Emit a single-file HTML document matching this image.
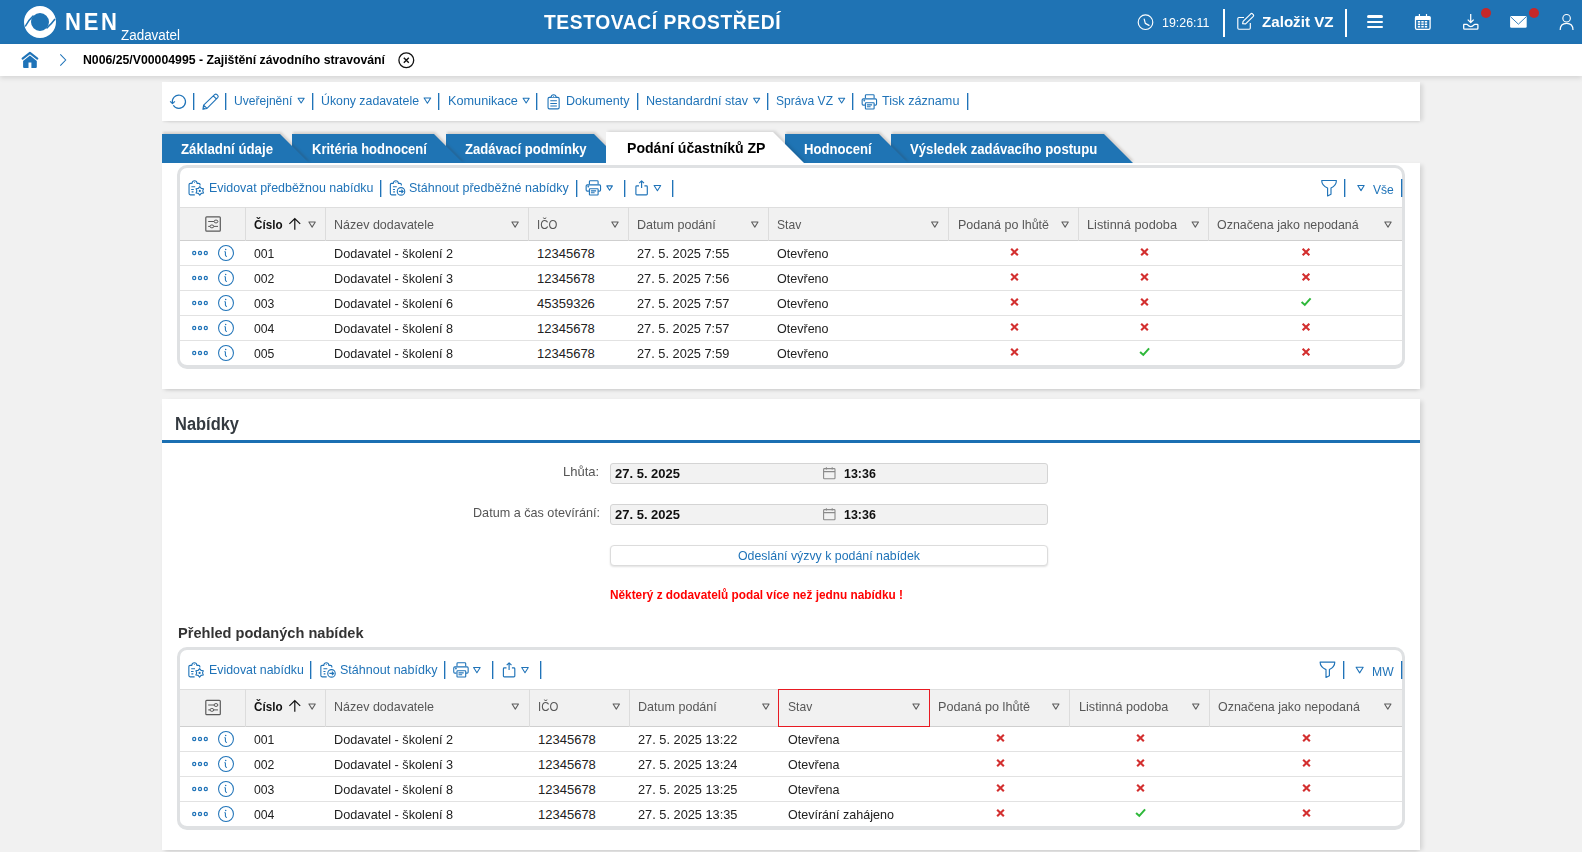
<!DOCTYPE html>
<html><head><meta charset="utf-8"><title>NEN</title>
<style>
html,body{margin:0;padding:0;width:1582px;height:852px;overflow:hidden;background:#f1f1f1;font-family:"Liberation Sans",sans-serif}
.t{position:absolute;white-space:nowrap;line-height:1;transform-origin:0 0}
svg{display:block}
</style></head><body>
<div style="position:relative;width:1582px;height:852px;overflow:hidden">
<div style="position:absolute;left:0;top:0;width:1582px;height:852px;background:#f1f1f1"></div>
<div style="position:absolute;left:0px;top:0px;width:1582px;height:44px;background:#1f73b4"></div>
<div style="position:absolute;left:0px;top:44px;width:1582px;height:32px;background:#fff;box-shadow:0 2px 5px rgba(0,0,0,0.12)"></div>
<div style="position:absolute;left:162px;top:82px;width:1258px;height:39px;background:#fff;box-shadow:4px 1px 4px -1px rgba(0,0,0,0.10), 0 2px 2px -1px rgba(0,0,0,0.08)"></div>
<div style="position:absolute;left:162px;top:163px;width:1258px;height:226px;background:#fff;box-shadow:4px 1px 4px -1px rgba(0,0,0,0.10), 0 3px 4px -2px rgba(0,0,0,0.13)"></div>
<div style="position:absolute;left:162px;top:399px;width:1258px;height:451px;background:#fff;box-shadow:4px 1px 4px -1px rgba(0,0,0,0.10), 0 3px 4px -2px rgba(0,0,0,0.13)"></div>
<svg style="position:absolute;left:24px;top:6px;overflow:visible" width="32" height="32" viewBox="0 0 32 32" >
<circle cx="16" cy="16" r="12.5" fill="none" stroke="#fff" stroke-width="7"/>
<path d="M9.5 9.6 Q4.5 14 1.2 20.5" fill="none" stroke="#1f73b4" stroke-width="1.5"/>
<path d="M22.5 22.4 Q27.5 18 31 13" fill="none" stroke="#1f73b4" stroke-width="1.5"/>
</svg>
<div style="position:absolute;left:1222.9px;top:8.5px;width:2.2px;height:28.1px;background:#fff"></div>
<div style="position:absolute;left:1344.9px;top:8.5px;width:2.2px;height:28.1px;background:#fff"></div>
<div style="position:absolute;left:1367px;top:15.25px;width:16px;height:2.5px;background:#fff;border-radius:1.5px"></div>
<div style="position:absolute;left:1367px;top:20.65px;width:16px;height:2.5px;background:#fff;border-radius:1.5px"></div>
<div style="position:absolute;left:1367px;top:25.95px;width:16px;height:2.5px;background:#fff;border-radius:1.5px"></div>
<div style="position:absolute;left:1481px;top:8px;width:10px;height:10px;border-radius:50%;background:#c62828"></div>
<div style="position:absolute;left:1529px;top:8px;width:10px;height:10px;border-radius:50%;background:#c62828"></div>
<svg style="position:absolute;left:398px;top:51.5px;overflow:visible" width="17" height="17" viewBox="0 0 17 17" ><circle cx="8.3" cy="8.3" r="7.4" fill="none" stroke="#111" stroke-width="1.3"/><path d="M5.8 5.8 L10.8 10.8 M10.8 5.8 L5.8 10.8" stroke="#111" stroke-width="1.4"/></svg>
<div style="position:absolute;left:193px;top:93px;width:1px;height:17px;background:#1f73b8;box-shadow:0.35px 0 0 #1f73b8"></div>
<div style="position:absolute;left:225px;top:93px;width:1px;height:17px;background:#1f73b8;box-shadow:0.35px 0 0 #1f73b8"></div>
<div style="position:absolute;left:312px;top:93px;width:1px;height:17px;background:#1f73b8;box-shadow:0.35px 0 0 #1f73b8"></div>
<div style="position:absolute;left:438px;top:93px;width:1px;height:17px;background:#1f73b8;box-shadow:0.35px 0 0 #1f73b8"></div>
<div style="position:absolute;left:536px;top:93px;width:1px;height:17px;background:#1f73b8;box-shadow:0.35px 0 0 #1f73b8"></div>
<div style="position:absolute;left:637px;top:93px;width:1px;height:17px;background:#1f73b8;box-shadow:0.35px 0 0 #1f73b8"></div>
<div style="position:absolute;left:767px;top:93px;width:1px;height:17px;background:#1f73b8;box-shadow:0.35px 0 0 #1f73b8"></div>
<div style="position:absolute;left:852px;top:93px;width:1px;height:17px;background:#1f73b8;box-shadow:0.35px 0 0 #1f73b8"></div>
<div style="position:absolute;left:967px;top:93px;width:1px;height:17px;background:#1f73b8;box-shadow:0.35px 0 0 #1f73b8"></div>
<div style="position:absolute;left:162px;top:129px;width:155px;height:34px;overflow:hidden;z-index:40"><svg style="position:absolute;left:0;top:0;filter:drop-shadow(1.5px -1.5px 1px rgba(60,40,20,0.16))" width="155" height="34"><polygon points="0,5 118,5 147,34 0,34" fill="#1f74b4"/></svg></div>
<div style="position:absolute;left:292px;top:129px;width:179px;height:34px;overflow:hidden;z-index:39"><svg style="position:absolute;left:0;top:0;filter:drop-shadow(1.5px -1.5px 1px rgba(60,40,20,0.16))" width="179" height="34"><polygon points="0,5 142,5 171,34 0,34" fill="#1f74b4"/></svg></div>
<div style="position:absolute;left:446px;top:129px;width:185px;height:34px;overflow:hidden;z-index:38"><svg style="position:absolute;left:0;top:0;filter:drop-shadow(1.5px -1.5px 1px rgba(60,40,20,0.16))" width="185" height="34"><polygon points="0,5 148,5 177,34 0,34" fill="#1f74b4"/></svg></div>
<div style="position:absolute;left:606px;top:127px;width:206px;height:36px;overflow:hidden;z-index:50"><svg style="position:absolute;left:0;top:0;filter:drop-shadow(2px -0.5px 1.5px rgba(0,0,0,0.13))" width="206" height="36"><polygon points="0,5 167,5 198,36 0,36" fill="#fff"/></svg></div>
<div style="position:absolute;left:785px;top:129px;width:131px;height:34px;overflow:hidden;z-index:36"><svg style="position:absolute;left:0;top:0;filter:drop-shadow(1.5px -1.5px 1px rgba(60,40,20,0.16))" width="131" height="34"><polygon points="0,5 94,5 123,34 0,34" fill="#1f74b4"/></svg></div>
<div style="position:absolute;left:891px;top:129px;width:250px;height:34px;overflow:hidden;z-index:35"><svg style="position:absolute;left:0;top:0;filter:drop-shadow(1.5px -1.5px 1px rgba(60,40,20,0.16))" width="250" height="34"><polygon points="0,5 213,5 242,34 0,34" fill="#1f74b4"/></svg></div>
<div style="position:absolute;left:177px;top:165px;width:1228px;height:204px;border:3px solid #dfe1e3;border-bottom-width:4px;border-radius:10px;box-sizing:border-box"></div>
<div style="position:absolute;left:380px;top:179.5px;width:1px;height:17.0px;background:#1f73b8;box-shadow:0.35px 0 0 #1f73b8"></div>
<div style="position:absolute;left:576px;top:179.5px;width:1px;height:17.0px;background:#1f73b8;box-shadow:0.35px 0 0 #1f73b8"></div>
<div style="position:absolute;left:624px;top:179.5px;width:1px;height:17.0px;background:#1f73b8;box-shadow:0.35px 0 0 #1f73b8"></div>
<div style="position:absolute;left:672px;top:179.5px;width:1px;height:17.0px;background:#1f73b8;box-shadow:0.35px 0 0 #1f73b8"></div>
<div style="position:absolute;left:1344px;top:179px;width:1px;height:17.5px;background:#1f73b8;box-shadow:0.35px 0 0 #1f73b8"></div>
<div style="position:absolute;left:1401px;top:179px;width:1px;height:17.5px;background:#1f73b8;box-shadow:0.35px 0 0 #1f73b8"></div>
<div style="position:absolute;left:180px;top:207px;width:1222px;height:34px;background:#f1f1f1;border-top:1px solid #dedede;border-bottom:1px solid #cfcfcf;box-sizing:border-box"></div>
<div style="position:absolute;left:245.0px;top:207px;width:1px;height:34px;background:#dcdcdc"></div>
<div style="position:absolute;left:325.0px;top:207px;width:1px;height:34px;background:#dcdcdc"></div>
<div style="position:absolute;left:527.5px;top:207px;width:1px;height:34px;background:#dcdcdc"></div>
<div style="position:absolute;left:627.5px;top:207px;width:1px;height:34px;background:#dcdcdc"></div>
<div style="position:absolute;left:767.5px;top:207px;width:1px;height:34px;background:#dcdcdc"></div>
<div style="position:absolute;left:947.5px;top:207px;width:1px;height:34px;background:#dcdcdc"></div>
<div style="position:absolute;left:1077.5px;top:207px;width:1px;height:34px;background:#dcdcdc"></div>
<div style="position:absolute;left:1207.5px;top:207px;width:1px;height:34px;background:#dcdcdc"></div>
<div style="position:absolute;left:180px;top:265px;width:1222px;height:1px;background:#e2e2e2"></div>
<div style="position:absolute;left:180px;top:290px;width:1222px;height:1px;background:#e2e2e2"></div>
<div style="position:absolute;left:180px;top:315px;width:1222px;height:1px;background:#e2e2e2"></div>
<div style="position:absolute;left:180px;top:340px;width:1222px;height:1px;background:#e2e2e2"></div>
<div style="position:absolute;left:162px;top:440px;width:1258px;height:3px;background:#1b6fb2"></div>
<div style="position:absolute;left:610px;top:463.3px;width:438px;height:21px;background:#f2f2f2;border:1px solid #d4d4d4;border-radius:3px;box-sizing:border-box"></div>
<svg style="position:absolute;left:822.5px;top:467.3px;overflow:visible" width="13" height="12.5" viewBox="0 0 13 12.5" ><rect x="0.6" y="1.6" width="11.4" height="10.2" rx="0.8" fill="none" stroke="#8a8a8a" stroke-width="1.1"/><path d="M0.6 4.6 H12 M3.4 0.3 V2.6 M9.2 0.3 V2.6" stroke="#8a8a8a" stroke-width="1.1"/></svg>
<div style="position:absolute;left:610px;top:504.3px;width:438px;height:21px;background:#f2f2f2;border:1px solid #d4d4d4;border-radius:3px;box-sizing:border-box"></div>
<svg style="position:absolute;left:822.5px;top:508.3px;overflow:visible" width="13" height="12.5" viewBox="0 0 13 12.5" ><rect x="0.6" y="1.6" width="11.4" height="10.2" rx="0.8" fill="none" stroke="#8a8a8a" stroke-width="1.1"/><path d="M0.6 4.6 H12 M3.4 0.3 V2.6 M9.2 0.3 V2.6" stroke="#8a8a8a" stroke-width="1.1"/></svg>
<div style="position:absolute;left:610px;top:545px;width:438px;height:21px;background:#fff;border:1px solid #dcdcdc;border-radius:4px;box-sizing:border-box;box-shadow:0 1px 2px rgba(0,0,0,0.12)"></div>
<div style="position:absolute;left:177px;top:647px;width:1228px;height:183px;border:3px solid #dfe1e3;border-bottom-width:4px;border-radius:10px;box-sizing:border-box"></div>
<div style="position:absolute;left:310px;top:661.3px;width:1px;height:17.300000000000068px;background:#1f73b8;box-shadow:0.35px 0 0 #1f73b8"></div>
<div style="position:absolute;left:444px;top:661.3px;width:1px;height:17.300000000000068px;background:#1f73b8;box-shadow:0.35px 0 0 #1f73b8"></div>
<div style="position:absolute;left:492px;top:661.3px;width:1px;height:17.300000000000068px;background:#1f73b8;box-shadow:0.35px 0 0 #1f73b8"></div>
<div style="position:absolute;left:540px;top:661.3px;width:1px;height:17.300000000000068px;background:#1f73b8;box-shadow:0.35px 0 0 #1f73b8"></div>
<div style="position:absolute;left:1343px;top:661px;width:1px;height:17.600000000000023px;background:#1f73b8;box-shadow:0.35px 0 0 #1f73b8"></div>
<div style="position:absolute;left:1401px;top:661px;width:1px;height:17.600000000000023px;background:#1f73b8;box-shadow:0.35px 0 0 #1f73b8"></div>
<div style="position:absolute;left:180px;top:689px;width:1222px;height:38px;background:#f1f1f1;border-top:1px solid #dedede;border-bottom:1px solid #cfcfcf;box-sizing:border-box"></div>
<div style="position:absolute;left:245.0px;top:689px;width:1px;height:38px;background:#dcdcdc"></div>
<div style="position:absolute;left:325.0px;top:689px;width:1px;height:38px;background:#dcdcdc"></div>
<div style="position:absolute;left:529.0px;top:689px;width:1px;height:38px;background:#dcdcdc"></div>
<div style="position:absolute;left:629.0px;top:689px;width:1px;height:38px;background:#dcdcdc"></div>
<div style="position:absolute;left:778.0px;top:689px;width:1px;height:38px;background:#dcdcdc"></div>
<div style="position:absolute;left:929.0px;top:689px;width:1px;height:38px;background:#dcdcdc"></div>
<div style="position:absolute;left:1069.0px;top:689px;width:1px;height:38px;background:#dcdcdc"></div>
<div style="position:absolute;left:1209.0px;top:689px;width:1px;height:38px;background:#dcdcdc"></div>
<div style="position:absolute;left:778px;top:689px;width:152px;height:38px;border:1.6px solid #e81a22;box-sizing:border-box"></div>
<div style="position:absolute;left:180px;top:751px;width:1222px;height:1px;background:#e2e2e2"></div>
<div style="position:absolute;left:180px;top:776px;width:1222px;height:1px;background:#e2e2e2"></div>
<div style="position:absolute;left:180px;top:801px;width:1222px;height:1px;background:#e2e2e2"></div>
<svg style="position:absolute;left:0;top:0;z-index:70" width="1582" height="852" viewBox="0 0 1582 852"><circle cx="1145.5" cy="22.2" r="7.3" fill="none" stroke="#fff" stroke-width="1.15"/><path d="M1144.2 19.2 L1145.3 23.4 L1149 25.4" fill="none" stroke="#fff" stroke-width="1.2" stroke-linecap="round" stroke-linejoin="round"/><path d="M1244 17.5 H1238.9 Q1237.8 17.5 1237.8 18.6 V28.1 Q1237.8 29.2 1238.9 29.2 H1249.2 Q1250.3 29.2 1250.3 28.1 V23" fill="none" stroke="#fff" stroke-width="1.15"/><path d="M1242.6 23.8 L1243.1 21.4 L1250.8 13.8 Q1251.6 13.1 1252.4 13.8 L1253.3 14.7 Q1254 15.5 1253.3 16.3 L1245.6 23.9 Z" fill="none" stroke="#fff" stroke-width="1.15" stroke-linejoin="round"/><rect x="1415.5" y="16.7" width="14.6" height="12.7" rx="1.4" fill="none" stroke="#fff" stroke-width="1.3"/><rect x="1415" y="16.2" width="15.6" height="3.8" rx="1.2" fill="#fff"/><path d="M1419.4 14 V17.5 M1426.5 14 V17.5" stroke="#fff" stroke-width="1.2"/><rect x="1417.80" y="21.00" width="2.4" height="1.6" fill="#fff"/><rect x="1417.80" y="23.45" width="2.4" height="1.6" fill="#fff"/><rect x="1417.80" y="25.90" width="2.4" height="1.6" fill="#fff"/><rect x="1421.30" y="21.00" width="2.4" height="1.6" fill="#fff"/><rect x="1421.30" y="23.45" width="2.4" height="1.6" fill="#fff"/><rect x="1421.30" y="25.90" width="2.4" height="1.6" fill="#fff"/><rect x="1424.80" y="21.00" width="2.4" height="1.6" fill="#fff"/><rect x="1424.80" y="23.45" width="2.4" height="1.6" fill="#fff"/><rect x="1424.80" y="25.90" width="2.4" height="1.6" fill="#fff"/><path d="M1470.7 14 V22.4 M1467.7 19.6 L1470.7 22.5 L1473.7 19.6" fill="none" stroke="#fff" stroke-width="1.25" stroke-linejoin="round"/><path d="M1463.8 24.3 H1466.6 Q1467.5 24.3 1468 25.2 Q1468.9 26.6 1470.8 26.6 Q1472.7 26.6 1473.6 25.2 Q1474.1 24.3 1475 24.3 H1477.1 Q1477.9 24.3 1477.9 25.1 V28.2 Q1477.9 29.1 1477 29.1 H1464.6 Q1463.7 29.1 1463.7 28.2 V25.1 Q1463.7 24.3 1464.5 24.3 Z" fill="none" stroke="#fff" stroke-width="1.3" stroke-linejoin="round"/><rect x="1510.1" y="16.1" width="16.6" height="11.7" rx="1.3" fill="#fff"/><path d="M1510.6 16.8 L1518.4 24.2 L1526.2 16.8" fill="none" stroke="#1f73b4" stroke-width="0.9"/><circle cx="1566.6" cy="18.2" r="3.75" fill="none" stroke="#fff" stroke-width="1.15"/><path d="M1560.2 29.9 Q1560.2 23.3 1566.6 23.3 Q1573 23.3 1573 29.9" fill="none" stroke="#fff" stroke-width="1.2"/><path d="M22.6 58.6 L29.95 52.9 L37.3 58.6" fill="none" stroke="#1f73b8" stroke-width="2.1" stroke-linecap="round" stroke-linejoin="round"/><path d="M23.1 61 L29.95 55.6 L36.8 61 V67 Q36.8 68 35.8 68 H31.4 V62.6 H28.5 V68 H24.1 Q23.1 68 23.1 67 Z" fill="#1f73b8"/><path d="M60.3 54.3 L65.7 60 L60.3 65.7" fill="none" stroke="#1f73b8" stroke-width="1.05"/><path d="M173.3 105.2 A6.6 6.6 0 1 0 172.5 103.3" fill="none" stroke="#1f73b8" stroke-width="1.15"/><path d="M170.1 101.3 L172.5 103.6 L174.9 101.3" fill="none" stroke="#1f73b8" stroke-width="1.15" stroke-linejoin="round"/><path d="M202.9 109.3 L203.6 105.2 L214.6 94.6 Q215.8 93.5 217 94.6 L217.7 95.3 Q218.8 96.5 217.7 97.7 L207 108.4 Z M203.6 105.2 L207 108.4 M213.3 95.9 L216.5 99" fill="none" stroke="#1f73b8" stroke-width="1.1" stroke-linejoin="round"/><path d="M203 109.2 L203.4 106.8 L205.3 108.7 Z" fill="#1f73b8"/><path d="M298.10 98.16 H304.20 L301.15 102.99 Z" fill="none" stroke="#1f73b8" stroke-width="1.05" stroke-linejoin="round"/><path d="M424.10 97.96 H430.70 L427.40 103.19 Z" fill="none" stroke="#1f73b8" stroke-width="1.05" stroke-linejoin="round"/><path d="M523.10 98.16 H529.20 L526.15 102.99 Z" fill="none" stroke="#1f73b8" stroke-width="1.05" stroke-linejoin="round"/><rect x="548.05" y="97.35" width="11.1" height="11.5" rx="1.3" fill="none" stroke="#1f73b8" stroke-width="1.1"/><path d="M551.0 97.35 Q551.3000000000001 94.7 553.6 94.7 Q555.9 94.7 556.2 97.35" fill="#fff" stroke="#1f73b8" stroke-width="1.1"/><circle cx="553.6" cy="96.2" r="0.55" fill="#1f73b8"/><path d="M550.3 100.8 H556.9 M550.3 103.5 H556.9 M550.3 106 H556.9" stroke="#1f73b8" stroke-width="1.1"/><path d="M753.60 98.16 H759.70 L756.65 102.99 Z" fill="none" stroke="#1f73b8" stroke-width="1.05" stroke-linejoin="round"/><path d="M838.60 98.16 H844.70 L841.65 102.99 Z" fill="none" stroke="#1f73b8" stroke-width="1.05" stroke-linejoin="round"/><g transform="translate(276.00,-86.00)" fill="none" stroke="#1f73b8" stroke-width="1.1"><path d="M589.4 184.3 V181.6 Q589.4 180.75 590.3 180.75 H597.2 Q598.1 180.75 598.1 181.6 V184.3"/><path d="M588.9 191.1 H587.3 Q586.15 191.1 586.15 190 V185.9 Q586.15 184.85 587.3 184.85 H599.5 Q600.55 184.85 600.55 185.9 V190 Q600.55 191.1 599.5 191.1 H598.2"/><rect x="589.4" y="188.7" width="8.7" height="6.3" rx="0.6" fill="#fff"/><path d="M590.9 190.9 H596.1 M590.9 192.7 H594.6"/><circle cx="588.3" cy="186.5" r="0.35" fill="#1f73b8"/></g><g transform="translate(0.00,0.00)"><path d="M200.04999999999998 185.6 V184.60000000000002 Q200.04999999999998 183.35000000000002 198.79999999999998 183.35000000000002 H197.15 Q196.85000000000002 180.70000000000002 194.55 180.70000000000002 Q192.25 180.70000000000002 191.95000000000002 183.35000000000002 H190.3 Q189.05 183.35000000000002 189.05 184.60000000000002 V193.6 Q189.05 194.85 190.3 194.85 H194.8" fill="none" stroke="#1f73b8" stroke-width="1.1"/><circle cx="194.55" cy="182.20000000000002" r="0.55" fill="#1f73b8"/><path d="M191.4 186.7 H195.2 M191.2 189.5 H193.8 M191.6 191.9 H193.5" stroke="#1f73b8" stroke-width="1.1"/><polygon points="199.80,186.60 201.25,188.39 203.52,188.75 202.70,190.90 203.52,193.05 201.25,193.41 199.80,195.20 198.35,193.41 196.08,193.05 196.90,190.90 196.08,188.75 198.35,188.39" fill="none" stroke="#1f73b8" stroke-width="1.1" stroke-linejoin="round"/><circle cx="199.8" cy="190.9" r="1.1" fill="#1f73b8"/></g><g transform="translate(0.00,0.00)"><path d="M401.35 185.6 V184.60000000000002 Q401.35 183.35000000000002 400.1 183.35000000000002 H398.45000000000005 Q398.15000000000003 180.70000000000002 395.85 180.70000000000002 Q393.55 180.70000000000002 393.25 183.35000000000002 H391.6 Q390.35 183.35000000000002 390.35 184.60000000000002 V193.6 Q390.35 194.85 391.6 194.85 H396.2" fill="none" stroke="#1f73b8" stroke-width="1.1"/><circle cx="395.85" cy="182.20000000000002" r="0.55" fill="#1f73b8"/><path d="M392.9 186.7 H396.8 M392.9 189.5 H395 M393.2 191.9 H394.9" stroke="#1f73b8" stroke-width="1.1"/><circle cx="401" cy="191.4" r="3.75" fill="none" stroke="#1f73b8" stroke-width="1.1"/><path d="M398.9 191.4 H403.2 M401.4 189.6 L403.2 191.4 L401.4 193.2" fill="none" stroke="#1f73b8" stroke-width="1.1"/></g><g transform="translate(0.00,0.00)" fill="none" stroke="#1f73b8" stroke-width="1.1"><path d="M589.4 184.3 V181.6 Q589.4 180.75 590.3 180.75 H597.2 Q598.1 180.75 598.1 181.6 V184.3"/><path d="M588.9 191.1 H587.3 Q586.15 191.1 586.15 190 V185.9 Q586.15 184.85 587.3 184.85 H599.5 Q600.55 184.85 600.55 185.9 V190 Q600.55 191.1 599.5 191.1 H598.2"/><rect x="589.4" y="188.7" width="8.7" height="6.3" rx="0.6" fill="#fff"/><path d="M590.9 190.9 H596.1 M590.9 192.7 H594.6"/><circle cx="588.3" cy="186.5" r="0.35" fill="#1f73b8"/></g><path d="M606.80 185.86 H612.40 L609.60 190.29 Z" fill="none" stroke="#1f73b8" stroke-width="1.05" stroke-linejoin="round"/><g transform="translate(0.00,0.00)" fill="none" stroke="#1f73b8" stroke-width="1.15"><path d="M639 185.8 H636.8 Q635.9 185.8 635.9 186.7 V194 Q635.9 194.9 636.8 194.9 H646.4 Q647.3 194.9 647.3 194 V186.7 Q647.3 185.8 646.4 185.8 H644.4"/><path d="M641.6 187.9 V180.9 M639.2 183.2 L641.6 180.8 L644 183.2" stroke-linejoin="round"/></g><path d="M654.10 185.46 H660.70 L657.40 190.69 Z" fill="none" stroke="#1f73b8" stroke-width="1.05" stroke-linejoin="round"/><g transform="translate(0.00,0.00)"><path d="M1321.7 180.5 H1336.4 Q1336.4 185.5 1331 188 V194.2 L1327.6 195.9 V188 Q1321.7 185.5 1321.7 180.5 Z" fill="none" stroke="#1f73b8" stroke-width="1.15" stroke-linejoin="round"/></g><path d="M1357.80 185.54 H1364.20 L1361.00 190.61 Z" fill="none" stroke="#1f73b8" stroke-width="1.05" stroke-linejoin="round"/><path d="M308.90 222.04 H315.30 L312.10 227.11 Z" fill="none" stroke="#5e5e5e" stroke-width="1.05" stroke-linejoin="round"/><path d="M511.90 222.04 H518.30 L515.10 227.11 Z" fill="none" stroke="#5e5e5e" stroke-width="1.05" stroke-linejoin="round"/><path d="M611.80 222.04 H618.20 L615.00 227.11 Z" fill="none" stroke="#5e5e5e" stroke-width="1.05" stroke-linejoin="round"/><path d="M751.60 222.04 H758.00 L754.80 227.11 Z" fill="none" stroke="#5e5e5e" stroke-width="1.05" stroke-linejoin="round"/><path d="M931.60 222.04 H938.00 L934.80 227.11 Z" fill="none" stroke="#5e5e5e" stroke-width="1.05" stroke-linejoin="round"/><path d="M1061.90 222.04 H1068.30 L1065.10 227.11 Z" fill="none" stroke="#5e5e5e" stroke-width="1.05" stroke-linejoin="round"/><path d="M1192.10 222.04 H1198.50 L1195.30 227.11 Z" fill="none" stroke="#5e5e5e" stroke-width="1.05" stroke-linejoin="round"/><path d="M1384.80 222.04 H1391.20 L1388.00 227.11 Z" fill="none" stroke="#5e5e5e" stroke-width="1.05" stroke-linejoin="round"/><g transform="translate(0.00,0.00)" fill="none" stroke="#5a5a5a"><rect x="205.8" y="216.8" width="14.5" height="14.4" rx="0.9" stroke-width="1.2"/><path d="M208.2 221.5 H218 M208.2 226.4 H218" stroke-width="1"/><ellipse cx="216" cy="221.5" rx="1.9" ry="1.45" fill="#f1f1f1" stroke-width="1"/><ellipse cx="211.9" cy="226.4" rx="1.9" ry="1.45" fill="#f1f1f1" stroke-width="1"/></g><g transform="translate(0.00,0.00)"><path d="M294.8 229.8 V218.8 M289.4 223.9 L294.8 218.6 L300.2 223.9" fill="none" stroke="#111" stroke-width="1.2"/></g><circle cx="194.2" cy="253" r="1.55" fill="none" stroke="#1f73b8" stroke-width="1.25"/><circle cx="200" cy="253" r="1.55" fill="none" stroke="#1f73b8" stroke-width="1.25"/><circle cx="205.8" cy="253" r="1.55" fill="none" stroke="#1f73b8" stroke-width="1.25"/><circle cx="226" cy="253" r="7.45" fill="none" stroke="#1f73b8" stroke-width="1.05"/><circle cx="225.7" cy="249.40" r="0.75" fill="#1f73b8"/><path d="M224.4 251.80 Q225.4 251.40 225.4 252.50 V255.10 Q225.4 256.30 227 256.60" fill="none" stroke="#1f73b8" stroke-width="1.05"/><path d="M1011.15 248.65 L1017.85 255.35 M1017.85 248.65 L1011.15 255.35" stroke="#d32f2f" stroke-width="2.1"/><path d="M1141.15 248.65 L1147.85 255.35 M1147.85 248.65 L1141.15 255.35" stroke="#d32f2f" stroke-width="2.1"/><path d="M1302.65 248.65 L1309.35 255.35 M1309.35 248.65 L1302.65 255.35" stroke="#d32f2f" stroke-width="2.1"/><circle cx="194.2" cy="278" r="1.55" fill="none" stroke="#1f73b8" stroke-width="1.25"/><circle cx="200" cy="278" r="1.55" fill="none" stroke="#1f73b8" stroke-width="1.25"/><circle cx="205.8" cy="278" r="1.55" fill="none" stroke="#1f73b8" stroke-width="1.25"/><circle cx="226" cy="278" r="7.45" fill="none" stroke="#1f73b8" stroke-width="1.05"/><circle cx="225.7" cy="274.40" r="0.75" fill="#1f73b8"/><path d="M224.4 276.80 Q225.4 276.40 225.4 277.50 V280.10 Q225.4 281.30 227 281.60" fill="none" stroke="#1f73b8" stroke-width="1.05"/><path d="M1011.15 273.65 L1017.85 280.35 M1017.85 273.65 L1011.15 280.35" stroke="#d32f2f" stroke-width="2.1"/><path d="M1141.15 273.65 L1147.85 280.35 M1147.85 273.65 L1141.15 280.35" stroke="#d32f2f" stroke-width="2.1"/><path d="M1302.65 273.65 L1309.35 280.35 M1309.35 273.65 L1302.65 280.35" stroke="#d32f2f" stroke-width="2.1"/><circle cx="194.2" cy="303" r="1.55" fill="none" stroke="#1f73b8" stroke-width="1.25"/><circle cx="200" cy="303" r="1.55" fill="none" stroke="#1f73b8" stroke-width="1.25"/><circle cx="205.8" cy="303" r="1.55" fill="none" stroke="#1f73b8" stroke-width="1.25"/><circle cx="226" cy="303" r="7.45" fill="none" stroke="#1f73b8" stroke-width="1.05"/><circle cx="225.7" cy="299.40" r="0.75" fill="#1f73b8"/><path d="M224.4 301.80 Q225.4 301.40 225.4 302.50 V305.10 Q225.4 306.30 227 306.60" fill="none" stroke="#1f73b8" stroke-width="1.05"/><path d="M1011.15 298.65 L1017.85 305.35 M1017.85 298.65 L1011.15 305.35" stroke="#d32f2f" stroke-width="2.1"/><path d="M1141.15 298.65 L1147.85 305.35 M1147.85 298.65 L1141.15 305.35" stroke="#d32f2f" stroke-width="2.1"/><path d="M1301.60 301.90 L1304.80 304.90 L1310.60 298.40" fill="none" stroke="#2eb83a" stroke-width="2"/><circle cx="194.2" cy="328" r="1.55" fill="none" stroke="#1f73b8" stroke-width="1.25"/><circle cx="200" cy="328" r="1.55" fill="none" stroke="#1f73b8" stroke-width="1.25"/><circle cx="205.8" cy="328" r="1.55" fill="none" stroke="#1f73b8" stroke-width="1.25"/><circle cx="226" cy="328" r="7.45" fill="none" stroke="#1f73b8" stroke-width="1.05"/><circle cx="225.7" cy="324.40" r="0.75" fill="#1f73b8"/><path d="M224.4 326.80 Q225.4 326.40 225.4 327.50 V330.10 Q225.4 331.30 227 331.60" fill="none" stroke="#1f73b8" stroke-width="1.05"/><path d="M1011.15 323.65 L1017.85 330.35 M1017.85 323.65 L1011.15 330.35" stroke="#d32f2f" stroke-width="2.1"/><path d="M1141.15 323.65 L1147.85 330.35 M1147.85 323.65 L1141.15 330.35" stroke="#d32f2f" stroke-width="2.1"/><path d="M1302.65 323.65 L1309.35 330.35 M1309.35 323.65 L1302.65 330.35" stroke="#d32f2f" stroke-width="2.1"/><circle cx="194.2" cy="353" r="1.55" fill="none" stroke="#1f73b8" stroke-width="1.25"/><circle cx="200" cy="353" r="1.55" fill="none" stroke="#1f73b8" stroke-width="1.25"/><circle cx="205.8" cy="353" r="1.55" fill="none" stroke="#1f73b8" stroke-width="1.25"/><circle cx="226" cy="353" r="7.45" fill="none" stroke="#1f73b8" stroke-width="1.05"/><circle cx="225.7" cy="349.40" r="0.75" fill="#1f73b8"/><path d="M224.4 351.80 Q225.4 351.40 225.4 352.50 V355.10 Q225.4 356.30 227 356.60" fill="none" stroke="#1f73b8" stroke-width="1.05"/><path d="M1011.15 348.65 L1017.85 355.35 M1017.85 348.65 L1011.15 355.35" stroke="#d32f2f" stroke-width="2.1"/><path d="M1140.10 351.90 L1143.30 354.90 L1149.10 348.40" fill="none" stroke="#2eb83a" stroke-width="2"/><path d="M1302.65 348.65 L1309.35 355.35 M1309.35 348.65 L1302.65 355.35" stroke="#d32f2f" stroke-width="2.1"/><g transform="translate(-0.20,482.00)"><path d="M200.04999999999998 185.6 V184.60000000000002 Q200.04999999999998 183.35000000000002 198.79999999999998 183.35000000000002 H197.15 Q196.85000000000002 180.70000000000002 194.55 180.70000000000002 Q192.25 180.70000000000002 191.95000000000002 183.35000000000002 H190.3 Q189.05 183.35000000000002 189.05 184.60000000000002 V193.6 Q189.05 194.85 190.3 194.85 H194.8" fill="none" stroke="#1f73b8" stroke-width="1.1"/><circle cx="194.55" cy="182.20000000000002" r="0.55" fill="#1f73b8"/><path d="M191.4 186.7 H195.2 M191.2 189.5 H193.8 M191.6 191.9 H193.5" stroke="#1f73b8" stroke-width="1.1"/><polygon points="199.80,186.60 201.25,188.39 203.52,188.75 202.70,190.90 203.52,193.05 201.25,193.41 199.80,195.20 198.35,193.41 196.08,193.05 196.90,190.90 196.08,188.75 198.35,188.39" fill="none" stroke="#1f73b8" stroke-width="1.1" stroke-linejoin="round"/><circle cx="199.8" cy="190.9" r="1.1" fill="#1f73b8"/></g><g transform="translate(-69.50,482.00)"><path d="M401.35 185.6 V184.60000000000002 Q401.35 183.35000000000002 400.1 183.35000000000002 H398.45000000000005 Q398.15000000000003 180.70000000000002 395.85 180.70000000000002 Q393.55 180.70000000000002 393.25 183.35000000000002 H391.6 Q390.35 183.35000000000002 390.35 184.60000000000002 V193.6 Q390.35 194.85 391.6 194.85 H396.2" fill="none" stroke="#1f73b8" stroke-width="1.1"/><circle cx="395.85" cy="182.20000000000002" r="0.55" fill="#1f73b8"/><path d="M392.9 186.7 H396.8 M392.9 189.5 H395 M393.2 191.9 H394.9" stroke="#1f73b8" stroke-width="1.1"/><circle cx="401" cy="191.4" r="3.75" fill="none" stroke="#1f73b8" stroke-width="1.1"/><path d="M398.9 191.4 H403.2 M401.4 189.6 L403.2 191.4 L401.4 193.2" fill="none" stroke="#1f73b8" stroke-width="1.1"/></g><g transform="translate(-132.40,482.00)" fill="none" stroke="#1f73b8" stroke-width="1.1"><path d="M589.4 184.3 V181.6 Q589.4 180.75 590.3 180.75 H597.2 Q598.1 180.75 598.1 181.6 V184.3"/><path d="M588.9 191.1 H587.3 Q586.15 191.1 586.15 190 V185.9 Q586.15 184.85 587.3 184.85 H599.5 Q600.55 184.85 600.55 185.9 V190 Q600.55 191.1 599.5 191.1 H598.2"/><rect x="589.4" y="188.7" width="8.7" height="6.3" rx="0.6" fill="#fff"/><path d="M590.9 190.9 H596.1 M590.9 192.7 H594.6"/><circle cx="588.3" cy="186.5" r="0.35" fill="#1f73b8"/></g><path d="M473.60 667.46 H480.20 L476.90 672.69 Z" fill="none" stroke="#1f73b8" stroke-width="1.05" stroke-linejoin="round"/><g transform="translate(-132.50,482.00)" fill="none" stroke="#1f73b8" stroke-width="1.15"><path d="M639 185.8 H636.8 Q635.9 185.8 635.9 186.7 V194 Q635.9 194.9 636.8 194.9 H646.4 Q647.3 194.9 647.3 194 V186.7 Q647.3 185.8 646.4 185.8 H644.4"/><path d="M641.6 187.9 V180.9 M639.2 183.2 L641.6 180.8 L644 183.2" stroke-linejoin="round"/></g><path d="M521.70 667.46 H528.30 L525.00 672.69 Z" fill="none" stroke="#1f73b8" stroke-width="1.05" stroke-linejoin="round"/><g transform="translate(-1.60,481.60)"><path d="M1321.7 180.5 H1336.4 Q1336.4 185.5 1331 188 V194.2 L1327.6 195.9 V188 Q1321.7 185.5 1321.7 180.5 Z" fill="none" stroke="#1f73b8" stroke-width="1.15" stroke-linejoin="round"/></g><path d="M1356.10 667.26 H1363.20 L1359.65 672.89 Z" fill="none" stroke="#1f73b8" stroke-width="1.05" stroke-linejoin="round"/><path d="M308.90 704.04 H315.30 L312.10 709.11 Z" fill="none" stroke="#5e5e5e" stroke-width="1.05" stroke-linejoin="round"/><path d="M512.10 704.04 H518.50 L515.30 709.11 Z" fill="none" stroke="#5e5e5e" stroke-width="1.05" stroke-linejoin="round"/><path d="M613.10 704.04 H619.50 L616.30 709.11 Z" fill="none" stroke="#5e5e5e" stroke-width="1.05" stroke-linejoin="round"/><path d="M762.70 704.04 H769.10 L765.90 709.11 Z" fill="none" stroke="#5e5e5e" stroke-width="1.05" stroke-linejoin="round"/><path d="M912.90 704.04 H919.30 L916.10 709.11 Z" fill="none" stroke="#5e5e5e" stroke-width="1.05" stroke-linejoin="round"/><path d="M1052.60 704.04 H1059.00 L1055.80 709.11 Z" fill="none" stroke="#5e5e5e" stroke-width="1.05" stroke-linejoin="round"/><path d="M1192.60 704.04 H1199.00 L1195.80 709.11 Z" fill="none" stroke="#5e5e5e" stroke-width="1.05" stroke-linejoin="round"/><path d="M1384.60 704.04 H1391.00 L1387.80 709.11 Z" fill="none" stroke="#5e5e5e" stroke-width="1.05" stroke-linejoin="round"/><g transform="translate(0.00,483.50)" fill="none" stroke="#5a5a5a"><rect x="205.8" y="216.8" width="14.5" height="14.4" rx="0.9" stroke-width="1.2"/><path d="M208.2 221.5 H218 M208.2 226.4 H218" stroke-width="1"/><ellipse cx="216" cy="221.5" rx="1.9" ry="1.45" fill="#f1f1f1" stroke-width="1"/><ellipse cx="211.9" cy="226.4" rx="1.9" ry="1.45" fill="#f1f1f1" stroke-width="1"/></g><g transform="translate(0.00,482.00)"><path d="M294.8 229.8 V218.8 M289.4 223.9 L294.8 218.6 L300.2 223.9" fill="none" stroke="#111" stroke-width="1.2"/></g><circle cx="194.2" cy="739" r="1.55" fill="none" stroke="#1f73b8" stroke-width="1.25"/><circle cx="200" cy="739" r="1.55" fill="none" stroke="#1f73b8" stroke-width="1.25"/><circle cx="205.8" cy="739" r="1.55" fill="none" stroke="#1f73b8" stroke-width="1.25"/><circle cx="226" cy="739" r="7.45" fill="none" stroke="#1f73b8" stroke-width="1.05"/><circle cx="225.7" cy="735.40" r="0.75" fill="#1f73b8"/><path d="M224.4 737.80 Q225.4 737.40 225.4 738.50 V741.10 Q225.4 742.30 227 742.60" fill="none" stroke="#1f73b8" stroke-width="1.05"/><path d="M997.15 734.65 L1003.85 741.35 M1003.85 734.65 L997.15 741.35" stroke="#d32f2f" stroke-width="2.1"/><path d="M1137.15 734.65 L1143.85 741.35 M1143.85 734.65 L1137.15 741.35" stroke="#d32f2f" stroke-width="2.1"/><path d="M1303.15 734.65 L1309.85 741.35 M1309.85 734.65 L1303.15 741.35" stroke="#d32f2f" stroke-width="2.1"/><circle cx="194.2" cy="764" r="1.55" fill="none" stroke="#1f73b8" stroke-width="1.25"/><circle cx="200" cy="764" r="1.55" fill="none" stroke="#1f73b8" stroke-width="1.25"/><circle cx="205.8" cy="764" r="1.55" fill="none" stroke="#1f73b8" stroke-width="1.25"/><circle cx="226" cy="764" r="7.45" fill="none" stroke="#1f73b8" stroke-width="1.05"/><circle cx="225.7" cy="760.40" r="0.75" fill="#1f73b8"/><path d="M224.4 762.80 Q225.4 762.40 225.4 763.50 V766.10 Q225.4 767.30 227 767.60" fill="none" stroke="#1f73b8" stroke-width="1.05"/><path d="M997.15 759.65 L1003.85 766.35 M1003.85 759.65 L997.15 766.35" stroke="#d32f2f" stroke-width="2.1"/><path d="M1137.15 759.65 L1143.85 766.35 M1143.85 759.65 L1137.15 766.35" stroke="#d32f2f" stroke-width="2.1"/><path d="M1303.15 759.65 L1309.85 766.35 M1309.85 759.65 L1303.15 766.35" stroke="#d32f2f" stroke-width="2.1"/><circle cx="194.2" cy="789" r="1.55" fill="none" stroke="#1f73b8" stroke-width="1.25"/><circle cx="200" cy="789" r="1.55" fill="none" stroke="#1f73b8" stroke-width="1.25"/><circle cx="205.8" cy="789" r="1.55" fill="none" stroke="#1f73b8" stroke-width="1.25"/><circle cx="226" cy="789" r="7.45" fill="none" stroke="#1f73b8" stroke-width="1.05"/><circle cx="225.7" cy="785.40" r="0.75" fill="#1f73b8"/><path d="M224.4 787.80 Q225.4 787.40 225.4 788.50 V791.10 Q225.4 792.30 227 792.60" fill="none" stroke="#1f73b8" stroke-width="1.05"/><path d="M997.15 784.65 L1003.85 791.35 M1003.85 784.65 L997.15 791.35" stroke="#d32f2f" stroke-width="2.1"/><path d="M1137.15 784.65 L1143.85 791.35 M1143.85 784.65 L1137.15 791.35" stroke="#d32f2f" stroke-width="2.1"/><path d="M1303.15 784.65 L1309.85 791.35 M1309.85 784.65 L1303.15 791.35" stroke="#d32f2f" stroke-width="2.1"/><circle cx="194.2" cy="814" r="1.55" fill="none" stroke="#1f73b8" stroke-width="1.25"/><circle cx="200" cy="814" r="1.55" fill="none" stroke="#1f73b8" stroke-width="1.25"/><circle cx="205.8" cy="814" r="1.55" fill="none" stroke="#1f73b8" stroke-width="1.25"/><circle cx="226" cy="814" r="7.45" fill="none" stroke="#1f73b8" stroke-width="1.05"/><circle cx="225.7" cy="810.40" r="0.75" fill="#1f73b8"/><path d="M224.4 812.80 Q225.4 812.40 225.4 813.50 V816.10 Q225.4 817.30 227 817.60" fill="none" stroke="#1f73b8" stroke-width="1.05"/><path d="M997.15 809.65 L1003.85 816.35 M1003.85 809.65 L997.15 816.35" stroke="#d32f2f" stroke-width="2.1"/><path d="M1136.10 812.90 L1139.30 815.90 L1145.10 809.40" fill="none" stroke="#2eb83a" stroke-width="2"/><path d="M1303.15 809.65 L1309.85 816.35 M1309.85 809.65 L1303.15 816.35" stroke="#d32f2f" stroke-width="2.1"/></svg>
<div class="t" style="left:65.00px;top:9.68px;font-size:24px;font-weight:bold;color:#fff;transform:scaleX(0.9176);letter-spacing:3px">NEN</div>
<div class="t" style="left:121.00px;top:27.75px;font-size:14px;font-weight:normal;color:#fff;transform:scaleX(0.9596);">Zadavatel</div>
<div class="t" style="left:544.00px;top:11.87px;font-size:20px;font-weight:bold;color:#fff;transform:scaleX(0.9628);letter-spacing:0.6px">TESTOVACÍ PROSTŘEDÍ</div>
<div class="t" style="left:1162.00px;top:16.83px;font-size:12.6px;font-weight:normal;color:#fff;transform:scaleX(0.9857);">19:26:11</div>
<div class="t" style="left:1261.50px;top:14.30px;font-size:15px;font-weight:bold;color:#fff;transform:scaleX(1.0094);">Založit VZ</div>
<div class="t" style="left:83.00px;top:53.72px;font-size:12.5px;font-weight:bold;color:#000;transform:scaleX(0.9812);">N006/25/V00004995 - Zajištění závodního stravování</div>
<div class="t" style="left:234.00px;top:94.19px;font-size:13px;font-weight:normal;color:#1f73b8;transform:scaleX(0.9289);">Uveřejnění</div>
<div class="t" style="left:321.00px;top:94.19px;font-size:13px;font-weight:normal;color:#1f73b8;transform:scaleX(0.9483);">Úkony zadavatele</div>
<div class="t" style="left:447.50px;top:94.19px;font-size:13px;font-weight:normal;color:#1f73b8;transform:scaleX(0.9757);">Komunikace</div>
<div class="t" style="left:566.00px;top:94.19px;font-size:13px;font-weight:normal;color:#1f73b8;transform:scaleX(0.9658);">Dokumenty</div>
<div class="t" style="left:646.30px;top:94.19px;font-size:13px;font-weight:normal;color:#1f73b8;transform:scaleX(0.9668);">Nestandardní stav</div>
<div class="t" style="left:776.40px;top:94.19px;font-size:13px;font-weight:normal;color:#1f73b8;transform:scaleX(0.9281);">Správa VZ</div>
<div class="t" style="left:882.00px;top:94.19px;font-size:13px;font-weight:normal;color:#1f73b8;transform:scaleX(0.9711);">Tisk záznamu</div>
<div class="t" style="left:181.00px;top:142.15px;font-size:14px;font-weight:bold;color:#fff;transform:scaleX(0.9460);z-index:60">Základní údaje</div>
<div class="t" style="left:311.60px;top:142.15px;font-size:14px;font-weight:bold;color:#fff;transform:scaleX(0.9290);z-index:60">Kritéria hodnocení</div>
<div class="t" style="left:465.20px;top:142.15px;font-size:14px;font-weight:bold;color:#fff;transform:scaleX(0.9351);z-index:60">Zadávací podmínky</div>
<div class="t" style="left:626.50px;top:139.80px;font-size:15px;font-weight:bold;color:#000;transform:scaleX(0.9388);z-index:60">Podání účastníků ZP</div>
<div class="t" style="left:804.30px;top:142.15px;font-size:14px;font-weight:bold;color:#fff;transform:scaleX(0.9360);z-index:60">Hodnocení</div>
<div class="t" style="left:910.00px;top:142.15px;font-size:14px;font-weight:bold;color:#fff;transform:scaleX(0.9399);z-index:60">Výsledek zadávacího postupu</div>
<div class="t" style="left:208.50px;top:180.99px;font-size:13px;font-weight:normal;color:#1f73b8;transform:scaleX(0.9563);">Evidovat předběžnou nabídku</div>
<div class="t" style="left:409.40px;top:180.99px;font-size:13px;font-weight:normal;color:#1f73b8;transform:scaleX(0.9613);">Stáhnout předběžné nabídky</div>
<div class="t" style="left:1373.20px;top:182.99px;font-size:13px;font-weight:normal;color:#1f73b8;transform:scaleX(0.9285);">Vše</div>
<div class="t" style="left:254.00px;top:217.99px;font-size:13px;font-weight:bold;color:#111;transform:scaleX(0.8967);">Číslo</div>
<div class="t" style="left:334.00px;top:217.99px;font-size:13px;font-weight:normal;color:#575757;transform:scaleX(0.9609);">Název dodavatele</div>
<div class="t" style="left:537.00px;top:217.99px;font-size:13px;font-weight:normal;color:#575757;transform:scaleX(0.8783);">IČO</div>
<div class="t" style="left:637.20px;top:217.99px;font-size:13px;font-weight:normal;color:#575757;transform:scaleX(0.9649);">Datum podání</div>
<div class="t" style="left:777.30px;top:217.99px;font-size:13px;font-weight:normal;color:#575757;transform:scaleX(0.9303);">Stav</div>
<div class="t" style="left:957.50px;top:217.99px;font-size:13px;font-weight:normal;color:#575757;transform:scaleX(0.9610);">Podaná po lhůtě</div>
<div class="t" style="left:1087.00px;top:217.99px;font-size:13px;font-weight:normal;color:#575757;transform:scaleX(0.9804);">Listinná podoba</div>
<div class="t" style="left:1217.30px;top:217.99px;font-size:13px;font-weight:normal;color:#575757;transform:scaleX(0.9563);">Označena jako nepodaná</div>
<div class="t" style="left:254.30px;top:246.99px;font-size:13px;font-weight:normal;color:#212121;transform:scaleX(0.9400);">001</div>
<div class="t" style="left:334.00px;top:246.99px;font-size:13px;font-weight:normal;color:#212121;transform:scaleX(0.9750);">Dodavatel - školení 2</div>
<div class="t" style="left:537.00px;top:246.99px;font-size:13px;font-weight:normal;color:#212121;transform:scaleX(1.0000);">12345678</div>
<div class="t" style="left:637.40px;top:246.99px;font-size:13px;font-weight:normal;color:#212121;transform:scaleX(0.9830);">27. 5. 2025 7:55</div>
<div class="t" style="left:777.00px;top:246.99px;font-size:13px;font-weight:normal;color:#212121;transform:scaleX(0.9640);">Otevřeno</div>
<div class="t" style="left:254.30px;top:271.99px;font-size:13px;font-weight:normal;color:#212121;transform:scaleX(0.9400);">002</div>
<div class="t" style="left:334.00px;top:271.99px;font-size:13px;font-weight:normal;color:#212121;transform:scaleX(0.9750);">Dodavatel - školení 3</div>
<div class="t" style="left:537.00px;top:271.99px;font-size:13px;font-weight:normal;color:#212121;transform:scaleX(1.0000);">12345678</div>
<div class="t" style="left:637.40px;top:271.99px;font-size:13px;font-weight:normal;color:#212121;transform:scaleX(0.9830);">27. 5. 2025 7:56</div>
<div class="t" style="left:777.00px;top:271.99px;font-size:13px;font-weight:normal;color:#212121;transform:scaleX(0.9640);">Otevřeno</div>
<div class="t" style="left:254.30px;top:296.99px;font-size:13px;font-weight:normal;color:#212121;transform:scaleX(0.9400);">003</div>
<div class="t" style="left:334.00px;top:296.99px;font-size:13px;font-weight:normal;color:#212121;transform:scaleX(0.9750);">Dodavatel - školení 6</div>
<div class="t" style="left:537.00px;top:296.99px;font-size:13px;font-weight:normal;color:#212121;transform:scaleX(1.0000);">45359326</div>
<div class="t" style="left:637.40px;top:296.99px;font-size:13px;font-weight:normal;color:#212121;transform:scaleX(0.9830);">27. 5. 2025 7:57</div>
<div class="t" style="left:777.00px;top:296.99px;font-size:13px;font-weight:normal;color:#212121;transform:scaleX(0.9640);">Otevřeno</div>
<div class="t" style="left:254.30px;top:321.99px;font-size:13px;font-weight:normal;color:#212121;transform:scaleX(0.9400);">004</div>
<div class="t" style="left:334.00px;top:321.99px;font-size:13px;font-weight:normal;color:#212121;transform:scaleX(0.9750);">Dodavatel - školení 8</div>
<div class="t" style="left:537.00px;top:321.99px;font-size:13px;font-weight:normal;color:#212121;transform:scaleX(1.0000);">12345678</div>
<div class="t" style="left:637.40px;top:321.99px;font-size:13px;font-weight:normal;color:#212121;transform:scaleX(0.9830);">27. 5. 2025 7:57</div>
<div class="t" style="left:777.00px;top:321.99px;font-size:13px;font-weight:normal;color:#212121;transform:scaleX(0.9640);">Otevřeno</div>
<div class="t" style="left:254.30px;top:346.99px;font-size:13px;font-weight:normal;color:#212121;transform:scaleX(0.9400);">005</div>
<div class="t" style="left:334.00px;top:346.99px;font-size:13px;font-weight:normal;color:#212121;transform:scaleX(0.9750);">Dodavatel - školení 8</div>
<div class="t" style="left:537.00px;top:346.99px;font-size:13px;font-weight:normal;color:#212121;transform:scaleX(1.0000);">12345678</div>
<div class="t" style="left:637.40px;top:346.99px;font-size:13px;font-weight:normal;color:#212121;transform:scaleX(0.9830);">27. 5. 2025 7:59</div>
<div class="t" style="left:777.00px;top:346.99px;font-size:13px;font-weight:normal;color:#212121;transform:scaleX(0.9640);">Otevřeno</div>
<div class="t" style="left:174.80px;top:414.76px;font-size:18px;font-weight:bold;color:#343a40;transform:scaleX(0.9140);">Nabídky</div>
<div class="t" style="left:563.30px;top:464.79px;font-size:13px;font-weight:normal;color:#555;transform:scaleX(1.0016);">Lhůta:</div>
<div class="t" style="left:472.50px;top:505.89px;font-size:13px;font-weight:normal;color:#555;transform:scaleX(0.9711);">Datum a čas otevírání:</div>
<div class="t" style="left:615.00px;top:466.89px;font-size:13px;font-weight:bold;color:#111;transform:scaleX(0.9991);">27. 5. 2025</div>
<div class="t" style="left:843.50px;top:466.89px;font-size:13px;font-weight:bold;color:#111;transform:scaleX(0.9564);">13:36</div>
<div class="t" style="left:615.00px;top:507.89px;font-size:13px;font-weight:bold;color:#111;transform:scaleX(0.9991);">27. 5. 2025</div>
<div class="t" style="left:843.50px;top:507.89px;font-size:13px;font-weight:bold;color:#111;transform:scaleX(0.9564);">13:36</div>
<div class="t" style="left:738.00px;top:548.99px;font-size:13px;font-weight:normal;color:#1f73b8;transform:scaleX(0.9504);">Odeslání výzvy k podání nabídek</div>
<div class="t" style="left:610.00px;top:587.99px;font-size:13px;font-weight:bold;color:#ff0000;transform:scaleX(0.9094);">Některý z dodavatelů podal více než jednu nabídku !</div>
<div class="t" style="left:177.50px;top:625.00px;font-size:15px;font-weight:bold;color:#333;transform:scaleX(0.9718);">Přehled podaných nabídek</div>
<div class="t" style="left:208.70px;top:662.59px;font-size:13px;font-weight:normal;color:#1f73b8;transform:scaleX(0.9505);">Evidovat nabídku</div>
<div class="t" style="left:339.50px;top:662.59px;font-size:13px;font-weight:normal;color:#1f73b8;transform:scaleX(0.9636);">Stáhnout nabídky</div>
<div class="t" style="left:1372.40px;top:665.29px;font-size:13px;font-weight:normal;color:#1f73b8;transform:scaleX(0.9351);">MW</div>
<div class="t" style="left:254.00px;top:699.99px;font-size:13px;font-weight:bold;color:#111;transform:scaleX(0.8967);">Číslo</div>
<div class="t" style="left:334.00px;top:699.99px;font-size:13px;font-weight:normal;color:#575757;transform:scaleX(0.9609);">Název dodavatele</div>
<div class="t" style="left:538.00px;top:699.99px;font-size:13px;font-weight:normal;color:#575757;transform:scaleX(0.8783);">IČO</div>
<div class="t" style="left:638.20px;top:699.99px;font-size:13px;font-weight:normal;color:#575757;transform:scaleX(0.9649);">Datum podání</div>
<div class="t" style="left:788.40px;top:699.99px;font-size:13px;font-weight:normal;color:#575757;transform:scaleX(0.9303);">Stav</div>
<div class="t" style="left:938.00px;top:699.99px;font-size:13px;font-weight:normal;color:#575757;transform:scaleX(0.9715);">Podaná po lhůtě</div>
<div class="t" style="left:1078.60px;top:699.99px;font-size:13px;font-weight:normal;color:#575757;transform:scaleX(0.9717);">Listinná podoba</div>
<div class="t" style="left:1218.00px;top:699.99px;font-size:13px;font-weight:normal;color:#575757;transform:scaleX(0.9570);">Označena jako nepodaná</div>
<div class="t" style="left:254.30px;top:732.99px;font-size:13px;font-weight:normal;color:#212121;transform:scaleX(0.9400);">001</div>
<div class="t" style="left:334.00px;top:732.99px;font-size:13px;font-weight:normal;color:#212121;transform:scaleX(0.9750);">Dodavatel - školení 2</div>
<div class="t" style="left:538.00px;top:732.99px;font-size:13px;font-weight:normal;color:#212121;transform:scaleX(1.0000);">12345678</div>
<div class="t" style="left:638.20px;top:732.99px;font-size:13px;font-weight:normal;color:#212121;transform:scaleX(0.9830);">27. 5. 2025 13:22</div>
<div class="t" style="left:788.40px;top:732.99px;font-size:13px;font-weight:normal;color:#212121;transform:scaleX(0.9640);">Otevřena</div>
<div class="t" style="left:254.30px;top:757.99px;font-size:13px;font-weight:normal;color:#212121;transform:scaleX(0.9400);">002</div>
<div class="t" style="left:334.00px;top:757.99px;font-size:13px;font-weight:normal;color:#212121;transform:scaleX(0.9750);">Dodavatel - školení 3</div>
<div class="t" style="left:538.00px;top:757.99px;font-size:13px;font-weight:normal;color:#212121;transform:scaleX(1.0000);">12345678</div>
<div class="t" style="left:638.20px;top:757.99px;font-size:13px;font-weight:normal;color:#212121;transform:scaleX(0.9830);">27. 5. 2025 13:24</div>
<div class="t" style="left:788.40px;top:757.99px;font-size:13px;font-weight:normal;color:#212121;transform:scaleX(0.9640);">Otevřena</div>
<div class="t" style="left:254.30px;top:782.99px;font-size:13px;font-weight:normal;color:#212121;transform:scaleX(0.9400);">003</div>
<div class="t" style="left:334.00px;top:782.99px;font-size:13px;font-weight:normal;color:#212121;transform:scaleX(0.9750);">Dodavatel - školení 8</div>
<div class="t" style="left:538.00px;top:782.99px;font-size:13px;font-weight:normal;color:#212121;transform:scaleX(1.0000);">12345678</div>
<div class="t" style="left:638.20px;top:782.99px;font-size:13px;font-weight:normal;color:#212121;transform:scaleX(0.9830);">27. 5. 2025 13:25</div>
<div class="t" style="left:788.40px;top:782.99px;font-size:13px;font-weight:normal;color:#212121;transform:scaleX(0.9640);">Otevřena</div>
<div class="t" style="left:254.30px;top:807.99px;font-size:13px;font-weight:normal;color:#212121;transform:scaleX(0.9400);">004</div>
<div class="t" style="left:334.00px;top:807.99px;font-size:13px;font-weight:normal;color:#212121;transform:scaleX(0.9750);">Dodavatel - školení 8</div>
<div class="t" style="left:538.00px;top:807.99px;font-size:13px;font-weight:normal;color:#212121;transform:scaleX(1.0000);">12345678</div>
<div class="t" style="left:638.20px;top:807.99px;font-size:13px;font-weight:normal;color:#212121;transform:scaleX(0.9830);">27. 5. 2025 13:35</div>
<div class="t" style="left:788.40px;top:807.99px;font-size:13px;font-weight:normal;color:#212121;transform:scaleX(0.9640);">Otevírání zahájeno</div>
</div>
</body></html>
